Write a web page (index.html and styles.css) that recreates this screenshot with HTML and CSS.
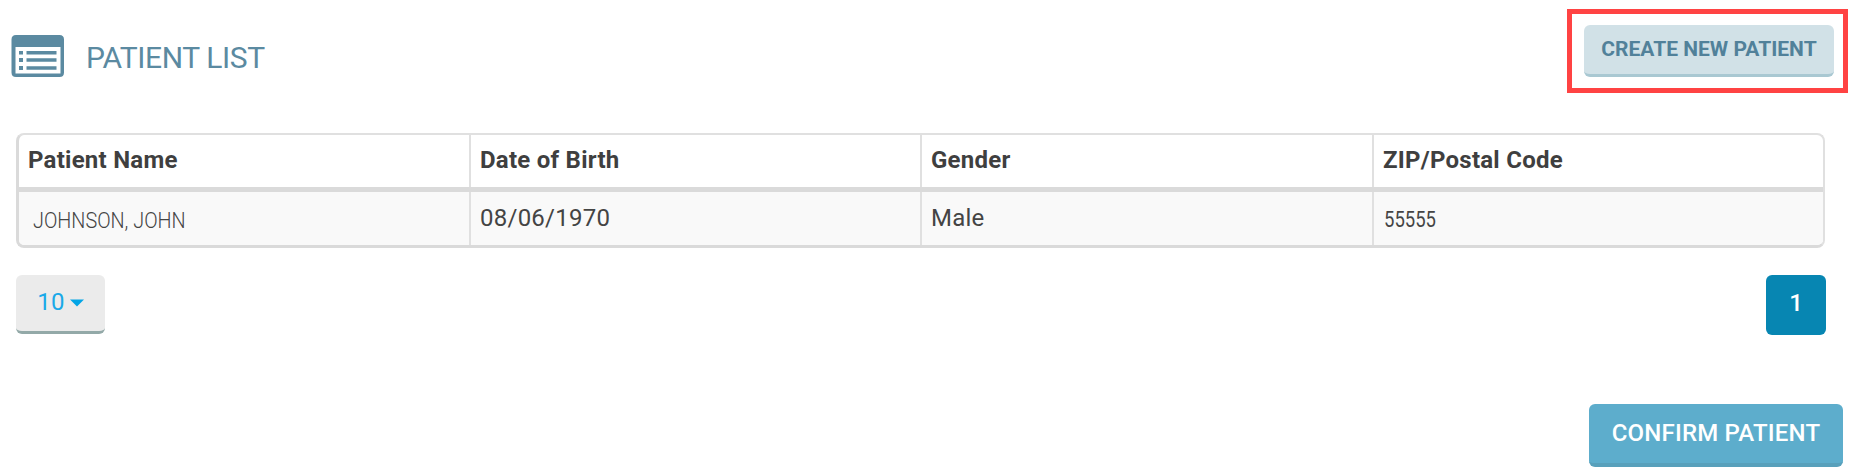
FILE: index.html
```html
<!DOCTYPE html>
<html lang="en">
<head>
<meta charset="utf-8">
<title>Patient List</title>
<link rel="stylesheet" href="styles.css">
</head>
<body>
<header class="header">
  <div class="heading">
    <svg class="list-icon" width="54" height="43" viewBox="0 0 54 43" fill="#5b8aa1">
      <path fill-rule="evenodd" d="M5 0H48.500Q53 0 53 4.500V37.500Q53 42 48.500 42H5Q0.500 42 0.500 37.500V4.500Q0.500 0 5 0ZM4.500 12V38.500H49.500V12Z"/>
      <path d="M8 16h4v3.500h-4zM8 23h4v4h-4zM8 31h4v4h-4zM15.500 16h30v3.500h-30zM15.500 23.300h30v3.500h-30zM15.500 31.300h30v3.500h-30z"/>
    </svg>
    <h1 class="title">PATIENT LIST</h1>
  </div>
  <div class="highlight"><button class="btn create"><span>CREATE NEW PATIENT</span></button></div>
</header>
<main>
  <div class="table-wrap">
    <div class="row head">
      <div class="cell">Patient Name</div>
      <div class="cell">Date of Birth</div>
      <div class="cell">Gender</div>
      <div class="cell">ZIP/Postal Code</div>
    </div>
    <div class="row body">
      <div class="cell"><span class="name">JOHNSON, JOHN</span></div>
      <div class="cell">08/06/1970</div>
      <div class="cell">Male</div>
      <div class="cell"><span class="zip">55555</span></div>
    </div>
  </div>
  <div class="pager">
    <button class="btn size"><span>10</span><svg width="14" height="8" viewBox="0 0 14 8"><path d="M0 0.500H14L7 7.500Z" fill="#03a5e6"/></svg></button>
    <button class="btn page"><span>1</span></button>
  </div>
  <div class="actions"><button class="btn confirm"><span>CONFIRM PATIENT</span></button></div>
</main>
</body>
</html>
```
FILE: styles.css
```css
* { box-sizing: border-box; }
body { margin: 0; width: 1858px; height: 476px; overflow: hidden; background: #fff; font-family: Roboto, sans-serif; color: #444; }
.header { display: flex; justify-content: space-between; height: 133px; padding: 9px 10px 0 11px; }
.heading { display: flex; align-items: flex-start; gap: 21px; padding-top: 26px; }
.list-icon { display: block; }
.title { margin: 5px 0 0; font-size: 30px; line-height: 36px; font-weight: 400; color: #5b8aa1; letter-spacing: -.4px; white-space: nowrap; }
.highlight { width: 281px; height: 84px; border: 5px solid #ff4343; padding: 11px 12px; }
.btn { display: flex; justify-content: center; align-items: flex-start; border: 0; border-radius: 6px; padding: 0; font-family: inherit; white-space: nowrap; }
.create { width: 250px; height: 52px; padding-top: 11px; background: #d1e1e7; border-bottom: 3px solid #a9c8d2; color: #51819a; font-size: 21px; line-height: 26px; font-weight: 700; }
.table-wrap { width: 1809px; height: 115px; margin-left: 16px; border: 2px solid #e0e0e0; border-left: 3px solid #dadada; border-bottom: 3px solid #dadada; border-radius: 8px; overflow: hidden; }
.row { display: grid; grid-template-columns: 452px 451px 452px 1fr; }
.cell { padding-left: 9px; border-right: 2px solid #e0e0e0; font-size: 24px; line-height: 28px; letter-spacing: .25px; white-space: nowrap; }
.cell:last-child { border-right: 0; }
.head { height: 57px; border-bottom: 5px solid #dadada; font-weight: 700; }
.head .cell { padding-top: 11px; color: #3f3f3f; }
.body { height: 53px; background: #f9f9f9; }
.body .cell { padding-top: 12px; }
.name, .zip { display: inline-block; font-size: 22px; letter-spacing: 0; font-weight: 300; transform-origin: left center; }
.name { margin-left: 5px; transform: translateY(2px) scaleX(.9); }
.zip { margin-left: 1px; transform: translateY(1px) scaleX(.84); font-weight: 400; }
.pager { display: flex; justify-content: space-between; margin: 27px 32px 0 16px; }
.size { width: 89px; height: 59px; padding-top: 13px; gap: 5px; background: #ebebeb; border-bottom: 3px solid #93a9a8; color: #19a9e8; font-size: 24px; line-height: 28px; letter-spacing: .3px; }
.size svg { margin-top: 11px; }
.page { width: 60px; height: 60px; padding-top: 14px; background: #0786b2; color: #fff; font-size: 24px; line-height: 28px; font-weight: 500; }
.actions { display: flex; justify-content: flex-end; margin: 69px 15px 0 0; }
.confirm { width: 254px; height: 63px; padding-top: 15px; background: #5dadcc; border-bottom: 4px solid #58a0bb; color: #fff; font-size: 24px; line-height: 28px; font-weight: 500; letter-spacing: .2px; }
```
